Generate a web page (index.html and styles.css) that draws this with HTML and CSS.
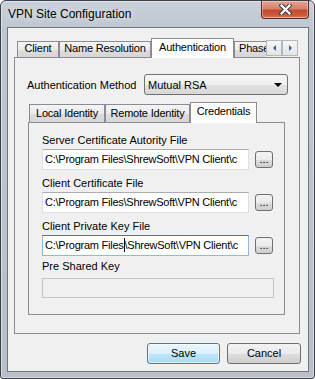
FILE: index.html
```html
<!DOCTYPE html>
<html lang="en">
<head>
    <meta charset="UTF-8">
    <title>VPN Site Configuration</title>
    <link rel="stylesheet" href="styles.css">
</head>
<body>
    <div class="window">
        <div class="titlebar">
            <span class="title">VPN Site Configuration</span>
            <div class="close-btn">
                <svg width="13" height="11" viewBox="0 0 13 11">
                    <path d="M2.5 1.5 L10.5 9.5 M10.5 1.5 L2.5 9.5" stroke="#3a3f46" stroke-width="4.2" stroke-linecap="square"/>
                    <path d="M2.5 1.5 L10.5 9.5 M10.5 1.5 L2.5 9.5" stroke="#ffffff" stroke-width="2.2" stroke-linecap="square"/>
                </svg>
            </div>
        </div>

        <div class="client">
            <div class="tabctl">
                <div class="tabstrip">
                    <div class="tablist">
                        <div class="tab w-client">Client</div>
                        <div class="tab w-names">Name Resolution</div>
                        <div class="tab active w-auth">Authentication</div>
                        <div class="tab w-phase">Phase</div>
                    </div>
                    <div class="scroller">
                        <div class="scroll-btn"><span class="arrow-left"></span></div>
                        <div class="scroll-btn"><span class="arrow-right"></span></div>
                    </div>
                </div>

                <div class="pane">
                    <div class="method-row">
                        <span>Authentication Method</span>
                        <div class="combo">
                            <span>Mutual RSA</span>
                            <span class="combo-arrow"></span>
                        </div>
                    </div>

                    <div class="subtabctl">
                        <div class="subtabstrip">
                            <div class="subtab w-local">Local Identity</div>
                            <div class="subtab w-remote">Remote Identity</div>
                            <div class="subtab active w-creds">Credentials</div>
                        </div>
                        <div class="subpane">
                            <div class="field-label">Server Certificate Autority File</div>
                            <div class="file-row">
                                <div class="textbox">C:\Program Files\ShrewSoft\VPN Client\c</div>
                                <div class="dots-btn">...</div>
                            </div>

                            <div class="field-label">Client Certificate File</div>
                            <div class="file-row">
                                <div class="textbox">C:\Program Files\ShrewSoft\VPN Client\c</div>
                                <div class="dots-btn">...</div>
                            </div>

                            <div class="field-label">Client Private Key File</div>
                            <div class="file-row">
                                <div class="textbox focused">C:\Program Files<span class="caret"></span>\ShrewSoft\VPN Client\c</div>
                                <div class="dots-btn">...</div>
                            </div>

                            <div class="field-label psk">Pre Shared Key</div>
                            <div class="textbox disabled"></div>
                        </div>
                    </div>
                </div>
            </div>

            <div class="buttons">
                <div class="btn default">Save</div>
                <div class="btn cancel">Cancel</div>
            </div>
        </div>
    </div>
</body>
</html>
```

FILE: styles.css
```css
/* dialog window */
body {
    margin: 0;
    padding: 0;
    background: #ffffff;
    font-family: "Liberation Sans", Arial, sans-serif;
    font-size: 11px;
    color: #000;
}

.window {
    width: 315px;
    height: 379px;
    box-sizing: border-box;
    border: 1px solid #3c4148;
    border-radius: 6px 6px 3px 3px;
    background: linear-gradient(180deg, #c8d0d9 0, #bec7d0 30px, #b7c0ca 100%);
    box-shadow: inset 0 0 0 1px rgba(255, 255, 255, 0.45);
    padding: 0 5px 6px 6px;
    display: flex;
    flex-direction: column;
}

.titlebar {
    height: 26px;
    display: flex;
    align-items: flex-start;
}

.title {
    flex: 1;
    padding-left: 1px;
    font-size: 12px;
    line-height: 26px;
    color: #000;
    text-shadow: 0 0 6px rgba(255, 255, 255, 0.8);
}

.close-btn {
    width: 46px;
    height: 17px;
    border: 1px solid #5a2a22;
    border-top: none;
    border-radius: 0 0 4px 4px;
    background: linear-gradient(180deg, #e6a595 0, #d7806b 45%, #c24a30 55%, #cf5a3a 85%, #e28866 100%);
    box-shadow: inset 0 0 0 1px rgba(255, 255, 255, 0.35);
    display: flex;
    align-items: center;
    justify-content: center;
}

.client {
    flex: 1;
    background-color: #f0f0f0;
    border: 1px solid #6d737b;
    padding: 10px 8px 7px 6px;
    display: flex;
    flex-direction: column;
}

/* outer tab control */
.tabctl {
    flex: 1;
    display: flex;
    flex-direction: column;
}

.tabstrip {
    height: 20px;
    display: flex;
    margin-bottom: -1px;
    position: relative;
    z-index: 1;
}

.tablist {
    flex: 1;
    display: flex;
    align-items: flex-end;
    padding-left: 3px;
    overflow: hidden;
}

.tab {
    flex: none;
    height: 15px;
    line-height: 13px;
    margin-bottom: 1px;
    border: 1px solid #898c95;
    border-bottom: none;
    background: linear-gradient(180deg, #f4f4f4 0, #ebebeb 50%, #dddddd 51%, #d6d6d6 100%);
    text-align: center;
    white-space: nowrap;
    letter-spacing: -0.2px;
}

.tab.active {
    height: 17px;
    padding-top: 2px;
    margin-bottom: 0;
    background: #ffffff;
}

.w-client { width: 40px; }
.w-names  { width: 90px; }
.w-auth   { width: 81px; }
.w-phase  { width: 40px; text-align: left; padding-left: 4px; }

.scroller {
    display: flex;
    margin: 2px 2px 0 0;
    height: 16px;
}

.scroll-btn {
    width: 14px;
    height: 14px;
    border: 1px solid #b4b7bd;
    background: linear-gradient(180deg, #f6f6f6, #e4e4e4);
    display: flex;
    align-items: center;
    justify-content: center;
}

.arrow-left {
    width: 0;
    height: 0;
    border-top: 3px solid transparent;
    border-bottom: 3px solid transparent;
    border-right: 3px solid #3d5d9e;
}

.arrow-right {
    width: 0;
    height: 0;
    border-top: 3px solid transparent;
    border-bottom: 3px solid transparent;
    border-left: 3px solid #3d5d9e;
}

.pane {
    flex: 1;
    border: 1px solid #898c95;
    background-color: #f0f0f0;
    padding: 16px 11px 0 12px;
}

.method-row {
    display: flex;
    align-items: center;
    height: 21px;
}

.combo {
    margin-left: auto;
    width: 139px;
    height: 19px;
    border: 1px solid #707070;
    border-radius: 3px;
    background: linear-gradient(180deg, #f6f6f6 0, #eeeeee 50%, #e2e2e2 51%, #d8d8d8 100%);
    display: flex;
    align-items: center;
    padding-left: 3px;
}

.combo span:first-child {
    flex: 1;
}

.combo-arrow {
    width: 0;
    height: 0;
    margin-right: 5px;
    border-left: 4px solid transparent;
    border-right: 4px solid transparent;
    border-top: 4px solid #000;
}

/* inner tab control */
.subtabctl {
    margin: 7px 3px 0 1px;
}

.subtabstrip {
    height: 21px;
    display: flex;
    align-items: flex-end;
    padding-left: 1px;
    margin-bottom: -1px;
    position: relative;
    z-index: 1;
}

.subtab {
    flex: none;
    height: 15px;
    padding-top: 2px;
    line-height: 13px;
    margin-bottom: 1px;
    border: 1px solid #898c95;
    border-bottom: none;
    background: linear-gradient(180deg, #f4f4f4 0, #ebebeb 50%, #dddddd 51%, #d6d6d6 100%);
    text-align: center;
    white-space: nowrap;
    letter-spacing: -0.2px;
}

.subtab.active {
    height: 18px;
    margin-bottom: 0;
    background: #ffffff;
}

.w-local  { width: 74px; }
.w-remote { width: 83px; }
.w-creds  { width: 65px; }

.subpane {
    border: 1px solid #898c95;
    background-color: #f0f0f0;
    padding: 11px 10px 16px 13px;
}

.field-label {
    line-height: 13px;
    margin: 7px 0 2px 0;
}

.field-label:first-child {
    margin-top: 0;
}

.field-label.psk {
    margin: 4px 0 5px 0;
}

.file-row {
    display: flex;
    align-items: center;
    gap: 6px;
}

.textbox {
    width: 203px;
    height: 19px;
    line-height: 19px;
    padding-left: 2px;
    border: 1px solid #dbdfe6;
    border-top-color: #abadb3;
    background: #ffffff;
    white-space: nowrap;
    overflow: hidden;
    letter-spacing: -0.25px;
}

.textbox.focused {
    border-color: #8cbbe0;
    border-top-color: #3d7bad;
}

.textbox.disabled {
    width: 228px;
    height: 18px;
    background: #f0f0f0;
    border-color: #c5c5c5;
}

.caret {
    display: inline-block;
    width: 1px;
    height: 14px;
    background: #000;
    vertical-align: -3px;
}

.dots-btn {
    width: 16px;
    height: 15px;
    line-height: 14px;
    border: 1px solid #707070;
    border-radius: 3px;
    background: linear-gradient(180deg, #f2f2f2 0, #ebebeb 50%, #dddddd 51%, #cfcfcf 100%);
    text-align: center;
}

/* bottom buttons */
.buttons {
    display: flex;
    justify-content: flex-end;
    gap: 7px;
    margin-top: 9px;
}

.btn {
    width: 71px;
    height: 19px;
    line-height: 19px;
    border: 1px solid #707070;
    border-radius: 3px;
    background: linear-gradient(180deg, #f2f2f2 0, #ebebeb 50%, #dddddd 51%, #cfcfcf 100%);
    text-align: center;
}

.btn.default {
    border-color: #3c7fb1;
    background: linear-gradient(180deg, #eaf6fd 0, #d9f0fc 50%, #bee6fd 51%, #a7d9f5 100%);
    box-shadow: inset 0 0 0 1px rgba(255, 255, 255, 0.6);
}

.btn.cancel {
    width: 72px;
    margin-right: -1px;
}
```
